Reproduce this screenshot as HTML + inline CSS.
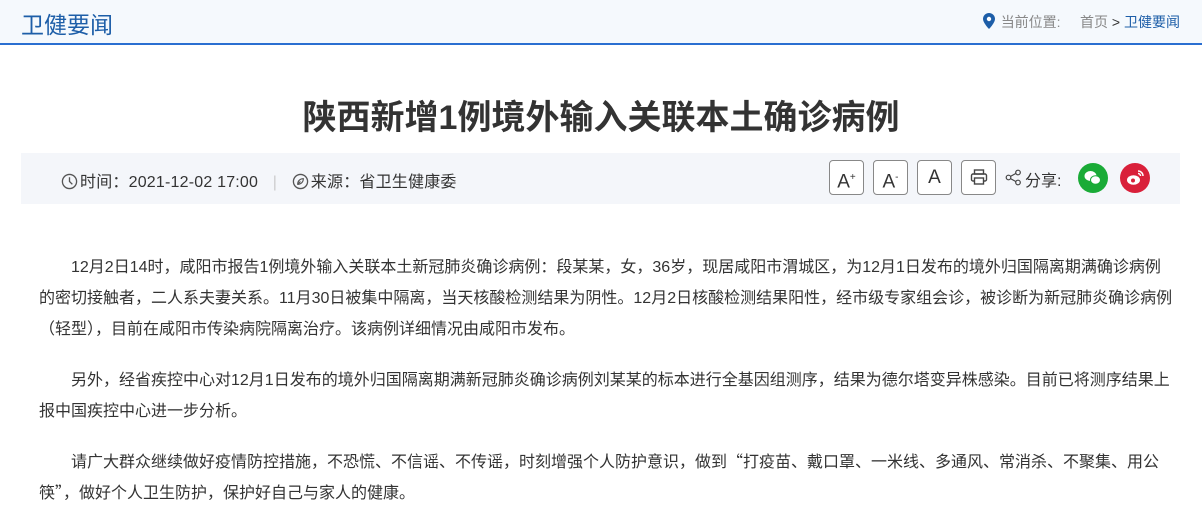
<!DOCTYPE html>
<html><head><meta charset="utf-8"><style>
body{margin:0;width:1202px;height:511px;overflow:hidden;background:#fff;font-family:"Liberation Sans","Noto Sans CJK SC",sans-serif;color:#333}
.hd{position:absolute;left:0;top:0;width:1202px;height:43px;background:#f5f9fd;border-bottom:2px solid #2a6fd1}
.hd .t{position:absolute;left:21px;top:6px;font-size:23px;color:#1d5ea8}
.hd .bc{position:absolute;right:22px;top:12px;font-size:14px;color:#888}
.hd .bc b{font-weight:normal;color:#1d5ea8}
h1{position:absolute;left:0;width:1202px;top:90px;margin:0;text-align:center;font-size:34px;font-weight:bold;color:#333}
.bar{position:absolute;left:21px;top:153px;width:1159px;height:51px;background:#f4f6fa;font-size:16px}
.bar .l{position:absolute;left:40px;top:15px;color:#333;letter-spacing:0.2px}
.btn{position:absolute;top:7px;width:35px;height:35px;box-sizing:border-box;border:1px solid #888;border-radius:4px;background:#fff;text-align:center;line-height:33px;font-size:19px;color:#333}
.ic{position:absolute;top:10px;width:30px;height:30px;border-radius:50%}
.txt{position:absolute;left:39px;top:252px;width:1138px;font-size:16px;line-height:31px;color:#333}
.txt p{margin:0 0 20px;text-indent:32px}
.q{font-family:"Noto Sans CJK SC",sans-serif;line-height:1}
</style></head><body>
<div class="hd"><div class="t">卫健要闻</div>
<div class="bc"><svg width="12" height="16" viewBox="0 0 12 16" style="vertical-align:-2px;margin-right:6px"><path d="M6 0C2.7 0 0 2.6 0 5.9 0 10 6 16 6 16s6-6 6-10.1C12 2.6 9.3 0 6 0z" fill="#1d5ea8"/><circle cx="6" cy="6" r="2.2" fill="#fff"/></svg>当前位置:&nbsp;&nbsp;&nbsp;&nbsp;&nbsp;首页 <span style="color:#333">&gt;</span> <b>卫健要闻</b></div></div>
<h1>陕西新增1例境外输入关联本土确诊病例</h1>
<div class="bar">
<div class="l"><svg width="17" height="17" viewBox="0 0 18 18" style="vertical-align:-3px;margin-right:2px"><circle cx="9" cy="9" r="7.5" fill="none" stroke="#555" stroke-width="1.4"/><path d="M9 4.5V9l3 3" fill="none" stroke="#555" stroke-width="1.4"/></svg>时间：2021-12-02 17:00 <span style="color:#ccc;margin:0 10px">|</span> <svg width="17" height="17" viewBox="0 0 18 18" style="vertical-align:-3px;margin-right:2px"><circle cx="9" cy="9" r="7.5" fill="none" stroke="#555" stroke-width="1.4"/><path d="M12 6C8 6 6 9 6 12c3 0 6-2 6-6zM6 12l3-3" fill="none" stroke="#555" stroke-width="1.2"/></svg>来源：省卫生健康委</div>
<div class="btn" style="left:808px">A<sup style="font-size:10px">+</sup></div>
<div class="btn" style="left:852px">A<sup style="font-size:10px">-</sup></div>
<div class="btn" style="left:896px">A</div>
<div class="btn" style="left:940px"><svg width="18" height="18" viewBox="0 0 18 18" style="vertical-align:-3px"><rect x="4.5" y="2" width="9" height="4" fill="none" stroke="#444" stroke-width="1.4"/><rect x="1.5" y="6" width="15" height="7" rx="1.5" fill="none" stroke="#444" stroke-width="1.4"/><rect x="4.5" y="10" width="9" height="6" fill="#fff" stroke="#444" stroke-width="1.4"/></svg></div>
<svg style="position:absolute;left:984px;top:16px" width="17" height="17" viewBox="0 0 17 17"><circle cx="13" cy="3.5" r="2.3" fill="none" stroke="#444" stroke-width="1.2"/><circle cx="3.5" cy="8.5" r="2.3" fill="none" stroke="#444" stroke-width="1.2"/><circle cx="13" cy="13.5" r="2.3" fill="none" stroke="#444" stroke-width="1.2"/><path d="M5.5 7.4l5.5-3M5.5 9.6l5.5 3" stroke="#444" stroke-width="1.2"/></svg>
<div style="position:absolute;left:1004px;top:14px">分享:</div>
<div class="ic" style="left:1057px;background:#1aab37"><svg width="30" height="30" viewBox="0 0 30 30"><ellipse cx="12.5" cy="13" rx="6" ry="5" fill="#fff"/><ellipse cx="17.5" cy="17" rx="5" ry="4.2" fill="#fff" stroke="#1aab37" stroke-width="1"/></svg></div>
<div class="ic" style="left:1099px;background:#d9203a"><svg width="30" height="30" viewBox="0 0 30 30"><ellipse cx="13.5" cy="17" rx="6.5" ry="4.8" fill="#fff"/><circle cx="13" cy="17.5" r="2" fill="#d9203a"/><path d="M18 8a5 5 0 0 1 5 5M18 10.5a2.5 2.5 0 0 1 2.5 2.5" fill="none" stroke="#fff" stroke-width="1.5"/></svg></div>
</div>
<div class="txt">
<p>12月2日14时，咸阳市报告1例境外输入关联本土新冠肺炎确诊病例：段某某，女，36岁，现居咸阳市渭城区，为12月1日发布的境外归国隔离期满确诊病例<br>的密切接触者，二人系夫妻关系。11月30日被集中隔离，当天核酸检测结果为阴性。12月2日核酸检测结果阳性，经市级专家组会诊，被诊断为新冠肺炎确诊病例<br>（轻型），目前在咸阳市传染病院隔离治疗。该病例详细情况由咸阳市发布。</p>
<p>另外，经省疾控中心对12月1日发布的境外归国隔离期满新冠肺炎确诊病例刘某某的标本进行全基因组测序，结果为德尔塔变异株感染。目前已将测序结果上<br>报中国疾控中心进一步分析。</p>
<p>请广大群众继续做好疫情防控措施，不恐慌、不信谣、不传谣，时刻增强个人防护意识，做到<span class="q">“</span>打疫苗、戴口罩、一米线、多通风、常消杀、不聚集、用公<br>筷<span class="q">”</span>，做好个人卫生防护，保护好自己与家人的健康。</p>
</div>
</body></html>
